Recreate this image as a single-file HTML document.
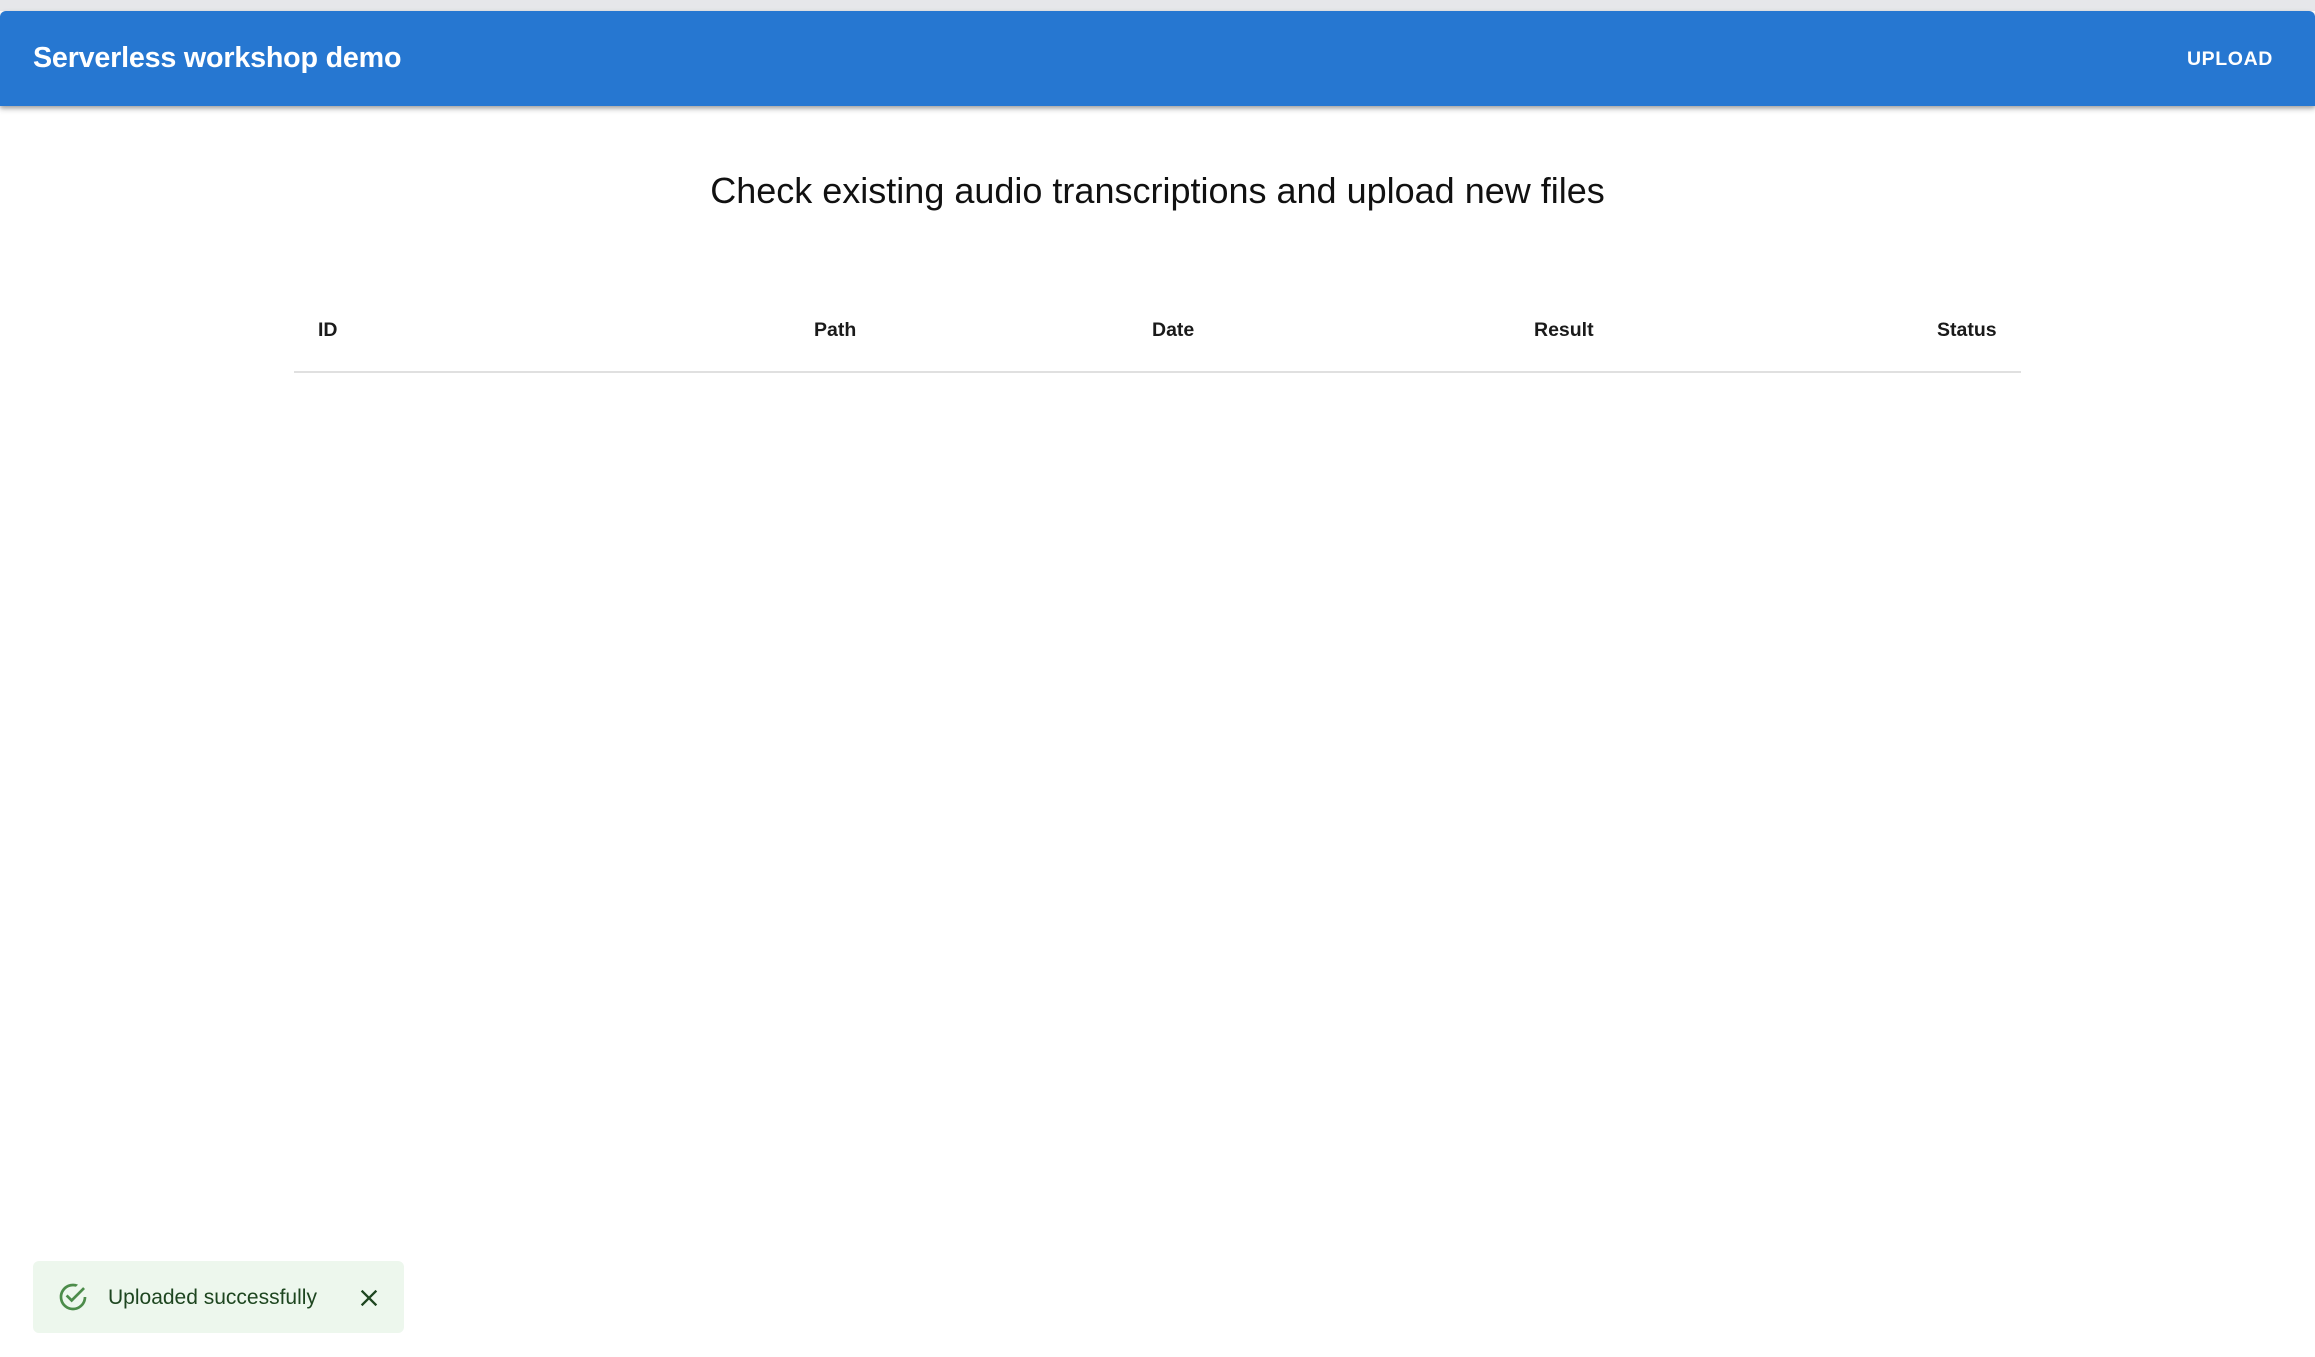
<!DOCTYPE html>
<html><head><meta charset="utf-8"><style>
html,body{margin:0;padding:0;width:2315px;height:1357px;background:#fff;overflow:hidden;font-family:"Liberation Sans",Arial,sans-serif;}
.top{position:absolute;left:0;top:0;width:2315px;height:11px;background:#e6e7ea;}
.bar{position:absolute;left:0;top:11px;width:2315px;height:95px;background:#2677d1;border-radius:6px 6px 0 0;box-shadow:0 3px 6px rgba(0,0,0,0.25),0 2px 3px rgba(0,0,0,0.15);}
.title{position:absolute;left:33px;top:0;line-height:95px;color:#fff;font-size:28.7px;font-weight:bold;letter-spacing:-0.2px;}
.up{position:absolute;left:2187px;top:1px;line-height:95px;color:#fff;font-size:19.5px;font-weight:bold;letter-spacing:0.6px;}
h1{position:absolute;left:0;width:2315px;top:168px;margin:0;text-align:center;font-weight:normal;font-size:36px;color:#111;line-height:46px;}
.th{position:absolute;top:317px;font-size:19.5px;font-weight:bold;color:#1a1a1a;line-height:26px;}
.line{position:absolute;left:294px;top:371px;width:1727px;height:2px;background:#e0e0e0;}
.snack{position:absolute;left:33px;top:1261px;width:371px;height:72px;background:#edf7ed;border-radius:6px;}
.snack .t{position:absolute;left:75px;top:1px;line-height:72px;font-size:21px;color:#1e4620;}
</style></head><body>
<div class="top"></div>
<div class="bar"><div class="title">Serverless workshop demo</div><div class="up">UPLOAD</div></div>
<h1>Check existing audio transcriptions and upload new files</h1>
<div class="th" style="left:318px">ID</div>
<div class="th" style="left:814px">Path</div>
<div class="th" style="left:1152px">Date</div>
<div class="th" style="left:1534px">Result</div>
<div class="th" style="left:1937px">Status</div>
<div class="line"></div>
<div class="snack">
<svg style="position:absolute;left:24px;top:20px" width="32" height="32" viewBox="0 0 24 24"><path fill="#4c8c4a" d="M20 12a8 8 0 1 1-8-8c.76 0 1.5.11 2.2.31l1.57-1.57A9.8 9.8 0 0 0 12 2C6.48 2 2 6.48 2 12s4.48 10 10 10 10-4.48 10-10zM7.91 10.08 6.5 11.5 11 16 21 6l-1.41-1.42L11 13.170z"/></svg>
<div class="t">Uploaded successfully</div>
<svg style="position:absolute;left:322px;top:23px" width="28" height="28" viewBox="0 0 24 24"><path fill="#1e4620" d="M19 6.41 17.59 5 12 10.59 6.41 5 5 6.410 10.59 12 5 17.59 6.41 19 12 13.41 17.59 19 19 17.59 13.41 12z"/></svg>
</div>
</body></html>
